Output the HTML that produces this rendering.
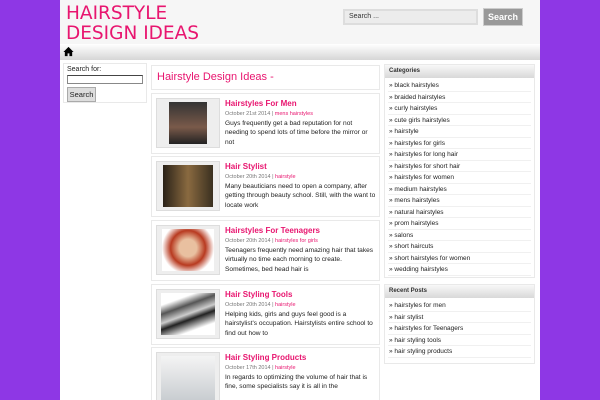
<!DOCTYPE html>
<html style="overflow:hidden;height:400px"><head><style>
*{margin:0;padding:0;box-sizing:border-box}
body{width:600px;height:400px;background:#8e37e5;font-family:"Liberation Sans",sans-serif;position:relative;overflow:hidden}
.a{position:absolute}
#page{left:60px;top:0;width:480px;height:400px;background:#fff}
#hdr{left:60px;top:0;width:480px;height:44px;background:#f6f6f6}
.logo{left:66px;top:4px;color:#e8156f;font-size:18.5px;line-height:20px;font-family:"DejaVu Sans",sans-serif}
#nav{left:60px;top:44px;width:480px;height:16px;background:linear-gradient(#fff,#d6d6d6)}
.sinput{left:343px;top:9px;width:135px;height:16px;background:#ececec;border:2px solid #ddd;font-size:7px;padding:2px 4px;color:#333}
.sbtn{left:483px;top:8px;width:40px;height:18px;background:#999;border:1px solid #ccc;color:#fff;font-size:9px;font-weight:bold;text-align:center;line-height:16px}
.box{border:1px solid #e9e9e9;background:#fff}
.ls{left:63px;top:63px;width:84px;height:40px}
.t7{font-size:7px;color:#222}
.content-h{left:151px;top:65px;width:229px;height:25px}
.post{left:151px;width:229px;height:61px}
.thumb{position:absolute;left:4px;top:4px;width:64px;height:50px;background:#eee;border:1px solid #ddd}
.thumb div{position:absolute;top:3px;bottom:3px;left:12px;right:12px}
.pt{position:absolute;left:73px;top:5px;color:#e8156f;font-size:8px;font-weight:bold}
.pd{position:absolute;left:73px;top:17px;color:#777;font-size:5.5px}
.pd span{color:#e8156f}
.px{position:absolute;left:73px;top:25px;width:152px;font-size:6.6px;line-height:9.3px;color:#222}
.rs{left:384px;width:151px}
.wh{height:13px;background:linear-gradient(#f8f8f8,#d8d8d8);font-size:6px;font-weight:bold;color:#333;padding:3px 4px}
.rs ul{list-style:none;padding:2px 3px}
.rs li{font-size:6.5px;color:#222;height:11.5px;line-height:11px;border-bottom:1px solid #f0f0f0;padding-left:1px}
</style></head><body>
<div class="a" id="page"></div>
<div class="a" id="hdr"></div>
<div class="a logo">HAIRSTYLE<br>DESIGN IDEAS</div>
<div class="a sinput">Search ...</div>
<div class="a sbtn">Search</div>
<div class="a" id="nav"></div>
<svg class="a" style="left:63px;top:46px" width="11" height="11" viewBox="0 0 12 12"><path d="M6 1L0.5 6.5H2V11H5V8H7V11H10V6.5H11.5Z" fill="#000"/></svg>

<div class="a box ls">
<div class="a t7" style="left:3px;top:2px">Search for:</div>
<div class="a" style="left:3px;top:11px;width:76px;height:9px;border:1px solid #888;border-top-color:#444;background:#fff"></div>
<div class="a" style="left:3px;top:23px;width:29px;height:15px;background:#ddd;border:1px solid #aaa;font-size:7.5px;line-height:13px;text-align:center;color:#222">Search</div>
</div>

<div class="a box content-h"><div class="a" style="left:5px;top:5px;color:#e8156f;font-size:11px">Hairstyle Design Ideas -</div></div>

<div class="a box post" style="top:93px"><div class="thumb"><div style="background:linear-gradient(#333,#7a5a4a 60%,#222)"></div></div><div class="pt">Hairstyles For Men</div><div class="pd">October 21st 2014 | <span>mens hairstyles</span></div><div class="px">Guys frequently get a bad reputation for not needing to spend lots of time before the mirror or not</div></div>
<div class="a box post" style="top:156px"><div class="thumb"><div style="left:6px;right:6px;background:linear-gradient(90deg,#2a2218,#8a6a40,#3a3020)"></div></div><div class="pt">Hair Stylist</div><div class="pd">October 20th 2014 | <span>hairstyle</span></div><div class="px">Many beauticians need to open a company, after getting through beauty school. Still, with the want to locate work</div></div>
<div class="a box post" style="top:220px"><div class="thumb"><div style="left:5px;right:5px;background:radial-gradient(circle at 50% 45%,#e9c0a0 25%,#b83a20 50%,#fff 75%)"></div></div><div class="pt">Hairstyles For Teenagers</div><div class="pd">October 20th 2014 | <span>hairstyles for girls</span></div><div class="px">Teenagers frequently need amazing hair that takes virtually no time each morning to create. Sometimes, bed head hair is</div></div>
<div class="a box post" style="top:284px"><div class="thumb"><div style="left:4px;right:4px;background:linear-gradient(160deg,#fff 20%,#555 35%,#ccc 50%,#222 60%,#fff 80%)"></div></div><div class="pt">Hair Styling Tools</div><div class="pd">October 20th 2014 | <span>hairstyle</span></div><div class="px">Helping kids, girls and guys feel good is a hairstylist's occupation. Hairstylists entire school to find out how to</div></div>
<div class="a box post" style="top:347px;height:53px;border-bottom:none"><div class="thumb" style="height:49px;border-bottom:none"><div style="left:4px;right:4px;bottom:0;background:linear-gradient(#f4f4f4,#c8ccd0)"></div></div><div class="pt">Hair Styling Products</div><div class="pd">October 17th 2014 | <span>hairstyle</span></div><div class="px">In regards to optimizing the volume of hair that is fine, some specialists say it is all in the</div></div>

<div class="a box rs" style="top:64px;height:214px">
<div class="wh">Categories</div>
<ul><li>» black hairstyles</li><li>» braided hairstyles</li><li>» curly hairstyles</li><li>» cute girls hairstyles</li><li>» hairstyle</li><li>» hairstyles for girls</li><li>» hairstyles for long hair</li><li>» hairstyles for short hair</li><li>» hairstyles for women</li><li>» medium hairstyles</li><li>» mens hairstyles</li><li>» natural hairstyles</li><li>» prom hairstyles</li><li>» salons</li><li>» short haircuts</li><li>» short hairstyles for women</li><li>» wedding hairstyles</li></ul>
</div>
<div class="a box rs" style="top:284px;height:80px">
<div class="wh">Recent Posts</div>
<ul><li>» hairstyles for men</li><li>» hair stylist</li><li>» hairstyles for Teenagers</li><li>» hair styling tools</li><li>» hair styling products</li></ul>
</div>
</body></html>
